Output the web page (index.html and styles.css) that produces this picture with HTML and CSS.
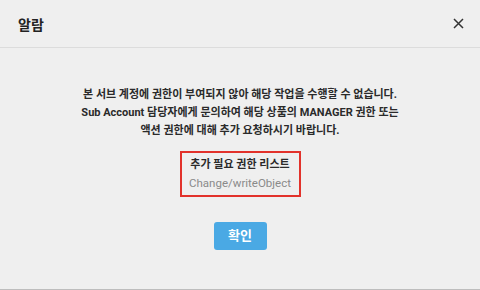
FILE: index.html
```html
<!DOCTYPE html>
<html>
<head>
	<meta charset="utf-8">
	<title>알람</title>
	<link rel="stylesheet" href="styles.css">
</head>
<body>
	<div class="dialog">
		<div class="header">
			<p class="title">알람</p>
			<a class="close">
				<svg width="11" height="11" viewBox="0 0 11 11"><path d="M1 1L10 10M10 1L1 10" stroke="#333" stroke-width="1.5" fill="none"/></svg>
			</a>
		</div>
		<div class="content">
			<p class="msg">본 서브 계정에 권한이 부여되지 않아 해당 작업을 수행할 수 없습니다.<br>Sub Account 담당자에게 문의하여 해당 상품의 MANAGER 권한 또는<br>액션 권한에 대해 추가 요청하시기 바랍니다.</p>
			<div class="perm">
				<p class="perm_title">추가 필요 권한 리스트</p>
				<p class="perm_item">Change/writeObject</p>
			</div>
			<a class="btn">확인</a>
		</div>
	</div>
</body>
</html>
```
FILE: styles.css
```css
body,p {
	margin: 0;
	padding: 0;
}

body {
	font-family: Roboto, "Noto Sans CJK KR", sans-serif;
	background: #efefef;
	color: #333;
}

.dialog {
	width: 480px;
	height: 290px;
	box-sizing: border-box;
	border-bottom: 1px solid #bdbdbd;
	display: flex;
	flex-direction: column;
}

.header {
	height: 47px;
	border-bottom: 1px solid #dcdcdc;
	display: flex;
	align-items: center;
	justify-content: space-between;
	padding: 0 14px 0 18px;
}
.title {
	font-size: 14px;
	font-weight: bold;
	color: #222;
}
.close {
	display: flex;
	padding: 2px;
}

.content {
	display: flex;
	flex-direction: column;
	align-items: center;
	padding-top: 38px;
}
.msg {
	font-size: 11px;
	font-weight: bold;
	line-height: 18px;
	text-align: center;
	color: #2a2a2a;
}

.perm {
	margin-top: 11px;
	width: 121px;
	box-sizing: border-box;
	border: 2px solid #e2322b;
	padding: 3px 0;
	text-align: center;
	line-height: 18px;
	font-size: 11px;
}
.perm_title {
	font-weight: bold;
	color: #2a2a2a;
}
.perm_item {
	font-size: 11.5px;
	color: #8a8a8a;
}

.btn {
	margin-top: 25px;
	width: 53px;
	height: 28px;
	line-height: 28px;
	border-radius: 3px;
	background: #4aa9e4;
	color: #fff;
	font-size: 13px;
	font-weight: bold;
	text-align: center;
}
```
